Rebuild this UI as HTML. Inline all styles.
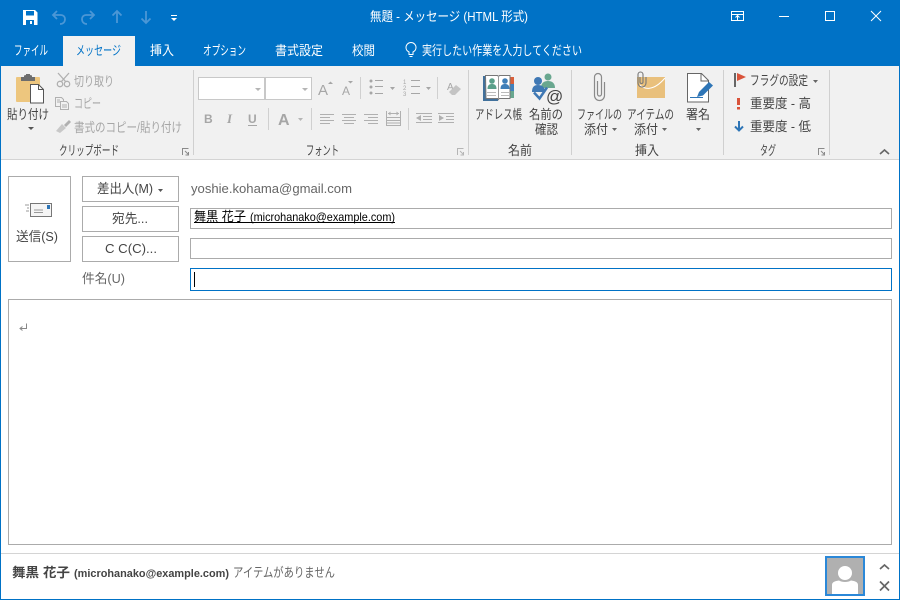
<!DOCTYPE html>
<html lang="ja"><head><meta charset="utf-8"><title>無題 - メッセージ</title>
<style>
html,body{margin:0;padding:0;background:#fff;width:900px;height:600px;overflow:hidden}
svg{display:block}
text{font-family:"Liberation Sans","Noto Sans CJK JP",sans-serif;font-size:13px;fill:#444;white-space:pre}
.w{fill:#fff}.d{fill:#a6a6a6}.g{fill:#666}.k{fill:#000}
</style></head><body>
<svg width="900" height="600" viewBox="0 0 900 600" xmlns="http://www.w3.org/2000/svg">
<rect width="900" height="600" fill="#0072c6"/>
<rect x="1" y="66" width="898" height="533" fill="#fff"/>
<rect x="1" y="66" width="898" height="93" fill="#f1f1f1"/>
<rect x="1" y="159" width="898" height="1" fill="#d4d4d4"/>
<rect x="63" y="36" width="72" height="30" fill="#f1f1f1"/>

<!-- QAT -->
<path d="M23 10h12l2.500 2.500V25H23z" fill="#fff"/>
<rect x="26" y="11" width="8" height="4.500" fill="#0072c6"/><rect x="26" y="20" width="8" height="5" fill="#0072c6"/><rect x="30" y="21" width="2" height="3" fill="#fff"/>
<g fill="none" stroke="#4b97d6" stroke-width="1.800">
<path d="M57 11l-4 4 4 4M53 15h8a4 4 0 0 1 4 4c0 3-2 5-5 5"/>
<path d="M90 11l4 4-4 4M94 15h-8a4 4 0 0 0-4 4c0 3 2 5 5 5"/>
<path d="M117 23V11M112.500 15.500L117 11l4.500 4.500"/>
<path d="M146 11v12M141.500 18.500L146 23l4.500-4.500"/>
</g>
<rect x="171" y="15" width="6" height="1" fill="#fff"/><path d="M171 18h6l-3 3z" fill="#fff"/>

<!-- Title -->
<text class="w" x="370" y="21" textLength="158" lengthAdjust="spacingAndGlyphs">無題 - メッセージ (HTML 形式)</text>

<!-- Window controls -->
<g fill="none" stroke="#fff" stroke-width="1">
<rect x="731.500" y="11.500" width="12" height="9"/><path d="M732 14.500h11M737.500 20v-4M735.500 17.500l2-2 2 2"/>
<path d="M779 16.500h10"/>
<rect x="825.500" y="11.500" width="9" height="9"/>
<path d="M871 11l10 10M881 11l-10 10"/>
</g>

<!-- Tabs -->
<text class="w" x="14" y="55" textLength="34" lengthAdjust="spacingAndGlyphs">ファイル</text>
<text x="76" y="55" textLength="45" lengthAdjust="spacingAndGlyphs" style="fill:#0072c6">メッセージ</text>
<text class="w" x="150" y="55" textLength="24" lengthAdjust="spacingAndGlyphs">挿入</text>
<text class="w" x="203" y="55" textLength="43" lengthAdjust="spacingAndGlyphs">オプション</text>
<text class="w" x="275" y="55" textLength="48" lengthAdjust="spacingAndGlyphs">書式設定</text>
<text class="w" x="352" y="55" textLength="23" lengthAdjust="spacingAndGlyphs">校閲</text>
<g fill="none" stroke="#fff" stroke-width="1"><path d="M409 54.500v-2.500c-2-1-3-3-3-4.500a5 5 0 0 1 10 0c0 1.500-1 3.500-3 4.500v2.500zM409.500 56.500h3"/></g>
<text class="w" x="422" y="55" textLength="160" lengthAdjust="spacingAndGlyphs">実行したい作業を入力してください</text>

<!-- Group separators -->
<g fill="#d0d0d0">
<rect x="193" y="70" width="1" height="85"/><rect x="468" y="70" width="1" height="85"/><rect x="571" y="70" width="1" height="85"/><rect x="723" y="70" width="1" height="85"/><rect x="829" y="70" width="1" height="85"/>
<rect x="268" y="108" width="1" height="22"/><rect x="311" y="108" width="1" height="22"/><rect x="408" y="108" width="1" height="22"/><rect x="360" y="77" width="1" height="22"/><rect x="437" y="77" width="1" height="22"/>
</g>

<!-- Clipboard -->
<rect x="16" y="77" width="24" height="25" rx="1" fill="#edc67e"/>
<path d="M21 77h3v-1.500l2-.500v-1h4v1l2 .500V77h3v4H21z" fill="#6d6d6d"/>
<path d="M30.500 84.500h8l5 5v13.500h-13z" fill="#fff" stroke="#555"/><path d="M38.500 84.500v5h5" fill="none" stroke="#555"/>
<text x="7" y="119" textLength="42" lengthAdjust="spacingAndGlyphs" fill="#333">貼り付け</text>
<path d="M28 127h6l-3 3z" fill="#555"/>
<g fill="none" stroke="#b0b0b0" stroke-width="1.300"><path d="M58 73l8 9M69 73l-8 9"/><circle cx="60" cy="84" r="2.700"/><circle cx="67" cy="84" r="2.700"/></g>
<text class="d" x="74" y="86" textLength="40" lengthAdjust="spacingAndGlyphs">切り取り</text>
<g fill="#f1f1f1" stroke="#b0b0b0"><path d="M55.500 97.500h6l2 2v7h-8z"/><path d="M60.500 101.500h6l2 2v6h-8z"/></g>
<path d="M62 105h5M62 107h5M57 100h3M57 102h3" stroke="#b0b0b0" fill="none"/>
<text class="d" x="74" y="108" textLength="27" lengthAdjust="spacingAndGlyphs">コピー</text>
<path d="M64 125l5-5 2 2-5 5z" fill="#b0b0b0"/><path d="M56 131l6-7 4 4-6 5z" fill="#c8c8c8"/>
<text class="d" x="74" y="132" textLength="108" lengthAdjust="spacingAndGlyphs">書式のコピー/貼り付け</text>
<text x="59" y="155" textLength="60" lengthAdjust="spacingAndGlyphs">クリップボード</text>

<!-- dialog launchers -->
<g fill="none" stroke="#8a8a8a"><path d="M182.500 155v-6.500h6"/><path d="M185 151l3.500 3.500"/><path d="M188.500 152v3h-3" /></g>
<g fill="none" stroke="#b5b5b5"><path d="M457.500 155v-6.500h6"/><path d="M460 151l3.500 3.500"/><path d="M463.500 152v3h-3"/></g>
<g fill="none" stroke="#8a8a8a"><path d="M818.500 155v-6.500h6"/><path d="M821 151l3.500 3.500"/><path d="M824.500 152v3h-3"/></g>

<!-- Font group -->
<rect x="198.500" y="77.500" width="66" height="22" fill="#fff" stroke="#c8c8c8"/>
<rect x="265.500" y="77.500" width="46" height="22" fill="#fff" stroke="#c8c8c8"/>
<path d="M255 88h6l-3 3zM302 88h6l-3 3z" fill="#b5b5b5"/>
<text class="d" x="318" y="95" style="font-size:15px">A</text><path d="M328 84l2.500-2.500L333 84z" fill="#a6a6a6"/>
<text class="d" x="342" y="95" style="font-size:12px">A</text><path d="M348 81h5l-2.500 2.500z" fill="#a6a6a6"/>
<g fill="#a6a6a6"><circle cx="371" cy="81" r="1.500"/><circle cx="371" cy="87" r="1.500"/><circle cx="371" cy="93" r="1.500"/><rect x="375" y="80" width="8" height="1"/><rect x="375" y="86" width="8" height="1"/><rect x="375" y="93" width="8" height="1"/><path d="M390 87h5l-2.500 3zM426 87h5l-2.500 3z"/>
<rect x="411" y="80" width="9" height="1"/><rect x="411" y="86" width="9" height="1"/><rect x="411" y="93" width="9" height="1"/></g>
<text class="d" x="403" y="84" style="font-size:6px">1</text><text class="d" x="403" y="90" style="font-size:6px">2</text><text class="d" x="403" y="96" style="font-size:6px">3</text>
<text class="d" x="447" y="90" style="font-size:10px">A</text><path d="M449 92l7-7 5 4-6 6h-3z" fill="#c4c4c4"/>
<text class="d" x="204" y="123" style="font-weight:bold;font-size:12px">B</text>
<text class="d" x="227" y="123" style="font-style:italic;font-family:'Liberation Serif',serif;font-size:13px;font-weight:bold">I</text>
<text class="d" x="248" y="123" style="font-weight:bold;font-size:12px">U</text><rect x="248" y="125" width="9" height="1" fill="#a6a6a6"/>
<text class="d" x="278" y="125" style="font-size:16px;font-weight:bold">A</text><path d="M298 118h5l-2.500 3z" fill="#b5b5b5"/>
<g fill="#b0b0b0">
<rect x="320" y="114" width="14" height="1"/><rect x="320" y="117" width="10" height="1"/><rect x="320" y="120" width="14" height="1"/><rect x="320" y="123" width="10" height="1"/>
<rect x="342" y="114" width="14" height="1"/><rect x="344" y="117" width="10" height="1"/><rect x="342" y="120" width="14" height="1"/><rect x="344" y="123" width="10" height="1"/>
<rect x="364" y="114" width="14" height="1"/><rect x="368" y="117" width="10" height="1"/><rect x="364" y="120" width="14" height="1"/><rect x="368" y="123" width="10" height="1"/>
<rect x="386" y="111" width="1" height="15"/><rect x="400" y="111" width="1" height="15"/><rect x="388" y="113" width="11" height="1"/><path d="M388 113.500l2.500-2v4zM399 113.500l-2.500-2v4z"/>
<rect x="387" y="117" width="13" height="1"/><rect x="387" y="120" width="13" height="1"/><rect x="387" y="122.500" width="13" height="1"/><rect x="387" y="125" width="13" height="1"/>
<rect x="416" y="113" width="16" height="1"/><rect x="423" y="116" width="9" height="1"/><rect x="423" y="119" width="9" height="1"/><rect x="416" y="122" width="16" height="1"/><path d="M416 118l5-3v6z"/>
<rect x="438" y="113" width="16" height="1"/><rect x="438" y="122" width="16" height="1"/><rect x="446" y="116" width="8" height="1"/><rect x="446" y="119" width="8" height="1"/><path d="M444 118l-5-3v6z"/>
</g>
<text x="306" y="155" textLength="33" lengthAdjust="spacingAndGlyphs">フォント</text>

<!-- Names -->
<rect x="510" y="77" width="4" height="7" fill="#d9603b"/><rect x="510" y="84" width="4" height="7" fill="#3f82bf"/><rect x="510" y="91" width="4" height="7" fill="#69a78f"/>
<path d="M483 76h3v22h12v3h-15z" fill="#41719c"/>
<path d="M485.500 75.500h12l1 1 1-1h10.500v23h-11l-.500 1-.500-1h-12z" fill="#fff" stroke="#777"/>
<path d="M498.500 76v23" stroke="#999"/>
<circle cx="492" cy="81" r="2.800" fill="#5aa08a"/><path d="M487.500 89c0-4 2-5 4.500-5s4.500 1 4.500 5z" fill="#5aa08a"/>
<circle cx="505" cy="81" r="2.800" fill="#3f7fb8"/><path d="M500.500 89c0-4 2-5 4.500-5s4.500 1 4.500 5z" fill="#3f7fb8"/>
<path d="M487 92.500h9M487 95.500h9M501 92.500h8M501 95.500h8" stroke="#bbb"/>
<text x="475" y="119" textLength="47" lengthAdjust="spacingAndGlyphs">アドレス帳</text>
<circle cx="548" cy="77" r="3.500" fill="#69a78f"/><path d="M541 88c0-5 3-7 7-7s7 2 7 7z" fill="#69a78f"/>
<circle cx="538" cy="81" r="4" fill="#3f78b4"/><path d="M532 92c0-5 2-7 6-7s7 2 7 7z" fill="#3f78b4"/>
<path d="M534 92.500l5.500 6 7.500-11" fill="none" stroke="#3f78b4" stroke-width="2.500"/>
<text x="546" y="102" style="font-size:17px" fill="#555">@</text>
<text x="529" y="119" textLength="34" lengthAdjust="spacingAndGlyphs">名前の</text>
<text x="535" y="134" textLength="23" lengthAdjust="spacingAndGlyphs">確認</text>
<text x="508" y="155" textLength="24" lengthAdjust="spacingAndGlyphs">名前</text>

<!-- Attach -->
<path d="M604.500 82V95.500a5 5 0 0 1-10 0V77a3.500 3.500 0 0 1 7 0V94a2 2 0 0 1-4 0V81" fill="none" stroke="#8a8a8a" stroke-width="1.200"/>
<text x="577" y="119" textLength="45" lengthAdjust="spacingAndGlyphs">ファイルの</text>
<text x="584" y="134" textLength="24" lengthAdjust="spacingAndGlyphs">添付</text><path d="M612 128h5l-2.500 3z" fill="#666"/>
<rect x="637" y="77" width="28" height="21" fill="#e9c07c"/>
<path d="M640 85c4 4 13 7 25-7" fill="none" stroke="#fff" stroke-width="1"/>
<path d="M646 77V83a4 4 0 0 1-8 0V74.500a2.500 2.500 0 0 1 5 0V82a1.500 1.500 0 0 1-3 0V77" fill="none" stroke="#777" stroke-width="1.100"/>
<text x="627" y="119" textLength="47" lengthAdjust="spacingAndGlyphs">アイテムの</text>
<text x="634" y="134" textLength="24" lengthAdjust="spacingAndGlyphs">添付</text><path d="M662 128h5l-2.500 3z" fill="#666"/>
<path d="M687.500 73.500h14l7 7v21.500h-21z" fill="#fff" stroke="#666"/><path d="M701 74v7h7" fill="none" stroke="#666"/>
<path d="M690 97.500h13" stroke="#2e75b6"/>
<path d="M697 97l2-5 10-10 4 3.500-10 10z" fill="#2e75b6"/>
<text x="686" y="119" textLength="24" lengthAdjust="spacingAndGlyphs">署名</text>
<path d="M696 128h5l-2.500 3z" fill="#666"/>
<text x="635" y="155" textLength="24" lengthAdjust="spacingAndGlyphs">挿入</text>

<!-- Tags -->
<rect x="734" y="73" width="2" height="14" fill="#666"/><path d="M737 73l9 4-9 4z" fill="#d9533a"/>
<text x="750" y="85" textLength="58" lengthAdjust="spacingAndGlyphs">フラグの設定</text><path d="M813 80h5l-2.500 3z" fill="#666"/>
<rect x="737" y="98" width="3" height="7" fill="#d9533a"/><rect x="737" y="107" width="3" height="2.500" fill="#d9533a"/>
<text x="750" y="108" textLength="61" lengthAdjust="spacingAndGlyphs">重要度 - 高</text>
<path d="M739 121v9M735 126.500l4 4 4-4" fill="none" stroke="#2e75b6" stroke-width="2"/>
<text x="750" y="131" textLength="61" lengthAdjust="spacingAndGlyphs">重要度 - 低</text>
<text x="760" y="155" textLength="16" lengthAdjust="spacingAndGlyphs">タグ</text>
<path d="M880 154l4.500-4 4.500 4" fill="none" stroke="#666" stroke-width="1.600"/>

<!-- Form -->
<g fill="#fff" stroke="#ababab">
<rect x="8.500" y="176.500" width="62" height="85"/>
<rect x="82.500" y="176.500" width="96" height="25"/>
<rect x="82.500" y="206.500" width="96" height="25"/>
<rect x="82.500" y="236.500" width="96" height="25"/>
<rect x="190.500" y="208.500" width="701" height="20"/>
<rect x="190.500" y="238.500" width="701" height="20"/>
<rect x="8.500" y="299.500" width="883" height="245"/>
</g>
<rect x="190.500" y="268.500" width="701" height="22" fill="#fff" stroke="#0072c6"/>
<rect x="194" y="272" width="1" height="15" fill="#000"/>
<rect x="30.500" y="203.500" width="21" height="13" fill="#f5f5f5" stroke="#777"/>
<rect x="47" y="205" width="3" height="4" fill="#2e75b6"/>
<path d="M34 210h9M34 212.500h9M25 205h4M27 208h2M26 211h3" stroke="#999"/>
<text x="16" y="241" textLength="42" lengthAdjust="spacingAndGlyphs">送信(S)</text>
<text x="97" y="193" textLength="56" lengthAdjust="spacingAndGlyphs">差出人(M)</text><path d="M158 189h5l-2.500 3z" fill="#555"/>
<text x="112" y="223" textLength="36" lengthAdjust="spacingAndGlyphs">宛先...</text>
<text x="105" y="253" textLength="52" lengthAdjust="spacingAndGlyphs">C C(C)...</text>
<text class="g" x="82" y="283" textLength="43" lengthAdjust="spacingAndGlyphs">件名(U)</text>
<text class="g" x="191" y="193" textLength="161" lengthAdjust="spacingAndGlyphs">yoshie.kohama@gmail.com</text>
<text class="k" x="194" y="221" textLength="52" lengthAdjust="spacingAndGlyphs">舞黒 花子</text>
<text class="k" x="250" y="221" textLength="145" lengthAdjust="spacingAndGlyphs" style="font-size:12px">(microhanako@example.com)</text>
<rect x="194" y="222" width="201" height="1" fill="#000"/>
<path d="M26.500 323.500v5h-6M22.500 326.500l-2.500 2 2.500 2" fill="none" stroke="#888"/>

<!-- Footer -->
<rect x="1" y="553" width="898" height="1" fill="#d4d4d4"/>
<text x="12" y="577" textLength="58" lengthAdjust="spacingAndGlyphs" style="font-weight:bold">舞黒 花子</text>
<text x="74" y="577" textLength="155" lengthAdjust="spacingAndGlyphs" style="font-weight:bold;font-size:11px">(microhanako@example.com)</text>
<text class="g" x="233" y="577" textLength="102" lengthAdjust="spacingAndGlyphs">アイテムがありません</text>
<rect x="826" y="557" width="38" height="38" fill="#b0b0b0" stroke="#2b88d8" stroke-width="2"/>
<circle cx="845" cy="573" r="7" fill="#fff"/>
<path d="M832 594v-9c0-3 3-4 7-4.500 3 2 9 2 12 0 4 .5 7 1.500 7 4.500v9z" fill="#fff"/>
<path d="M880 569l4.500-4 4.500 4" fill="none" stroke="#666" stroke-width="1.700"/>
<path d="M880 581.500l9 9M889 581.500l-9 9" fill="none" stroke="#666" stroke-width="1.700"/>
</svg>
</body></html>
